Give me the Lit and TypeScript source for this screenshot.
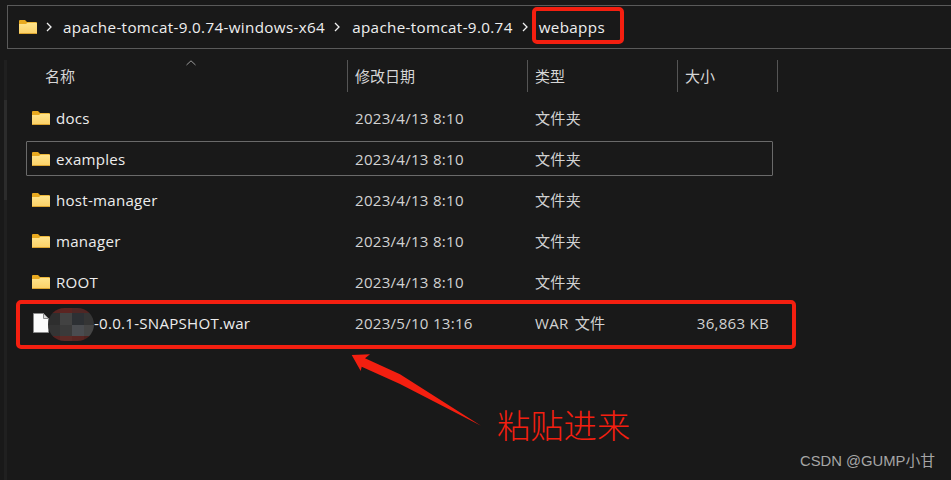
import { LitElement, html, css, svg } from "lit";
import { customElement } from "lit/decorators.js";

const folderIcon = svg`<svg class="ficon" viewBox="0 0 18 16" width="18" height="16">
  <defs><linearGradient id="fg" x1="0" y1="0" x2="0" y2="1"><stop offset="0" stop-color="#ffe48c"/><stop offset="1" stop-color="#fbd066"/></linearGradient></defs>
  <path d="M0 2 Q0 1 1 1 H6 L8 3 H17 Q18 3 18 4 V14 Q18 15 17 15 H1 Q0 15 0 14 Z" fill="#e8a91f"/>
  <path d="M0 5 H7 L8.500 3.800 H17 Q18 3.800 18 4.800 V14 Q18 15 17 15 H1 Q0 15 0 14 Z" fill="url(#fg)"/>
  <path d="M0 14 H18 Q18 15 17 15 H1 Q0 15 0 14 Z" fill="#dba32e"/>
</svg>`;

const fileIcon = svg`<svg class="ficon" viewBox="0 0 16 20" width="16" height="20">
  <path d="M0.500 0.500 H10.500 L15.500 5.500 V19.500 H0.500 Z" fill="#fbfbfb" stroke="#8a8a8a"/>
  <path d="M10.500 0.500 V5.500 H15.500 Z" fill="#d9d9d9" stroke="#8a8a8a"/>
</svg>`;

const chevron = svg`<svg class="chev" viewBox="0 0 6 10" width="6" height="10"><path d="M1 1 L5 5 L1 9" fill="none" stroke="#f0f0f0" stroke-width="1.300"/></svg>`;

const mosaic = [
  "#5a2320", "#5b2421", "#4e2725", "#512523",
  "#2e2e2e", "#424242", "#2d3034", "#353535",
  "#343434", "#3a3a3a", "#4a4c50", "#454545",
  "#572321", "#5c2a26", "#582522", "#4e2220",
];

interface Row { name: string; date: string; type: string; size?: string; file?: boolean; selected?: boolean; }

const rows: Row[] = [
  { name: "docs", date: "2023/4/13 8:10", type: "文件夹" },
  { name: "examples", date: "2023/4/13 8:10", type: "文件夹", selected: true },
  { name: "host-manager", date: "2023/4/13 8:10", type: "文件夹" },
  { name: "manager", date: "2023/4/13 8:10", type: "文件夹" },
  { name: "ROOT", date: "2023/4/13 8:10", type: "文件夹" },
  { name: "-0.0.1-SNAPSHOT.war", date: "2023/5/10 13:16", type: "WAR 文件", size: "36,863 KB", file: true },
];

@customElement("app-root")
export class AppRoot extends LitElement {
  static styles = css`
    :host {
      display: block;
      position: relative;
      width: 951px;
      height: 480px;
      overflow: hidden;
      background: #191919;
      color: #e6e6e6;
      font-family: "Open Sans", "Noto Sans CJK SC", sans-serif;
      font-size: 15.1px;
      letter-spacing: 0.25px;
    }
    .address {
      box-sizing: border-box;
      margin: 5px 0 0 7px;
      width: 960px;
      height: 44px;
      border: 1px solid #5a5a5a;
      display: flex;
      align-items: center;
      padding-left: 11px;
      color: #efefef;
      font-size: 15.2px;
      letter-spacing: 0.35px;
    }
    .address .ficon { margin-right: 9px; }
    .chev { flex: none; }
    .crumb { margin: 0 9px 0 12px; white-space: nowrap; }
    .crumb.first { margin-left: 11px; }
    .crumb.last { margin-left: 11px; }
    .header {
      display: grid;
      grid-template-columns: 321px 180px 150px 100px;
      width: 751px;
      height: 32px;
      margin: 11px 0 0 27px;
      position: relative;
      color: #d6d6d6;
      font-size: 15px;
      letter-spacing: 0;
    }
    .header div {
      display: flex;
      align-items: center;
      padding: 0 0 2px 7px;
      border-right: 1px solid #555;
      box-sizing: border-box;
      position: relative;
    }
    .header div:first-child { padding-left: 18px; }
    .sort {
      position: absolute;
      left: 159px;
      top: 0;
    }
    .list {
      display: flex;
      flex-direction: column;
      gap: 6px;
      width: 747px;
      margin: 8px 0 0 26px;
    }
    .row {
      display: grid;
      grid-template-columns: 321px 180px 150px 96px;
      height: 35px;
      box-sizing: border-box;
      align-items: center;
      border: 1px solid transparent;
      border-radius: 1px;
    }
    .row.selected { border-color: #6a6a6a; }
    .cell { padding-left: 7px; white-space: nowrap; color: #d2d2d2; }
    .cell.type { padding-bottom: 2px; }
    .row.file .type { word-spacing: 2px; }
    .row .cell:first-child {
      display: flex;
      align-items: center;
      gap: 6px;
      padding-left: 5px;
      color: #ededed;
    }
    .row .size { text-align: right; padding: 0 5px 0 0; }
    .row.file .cell:first-child { gap: 45px; padding-left: 6px; }
    .scroll {
      position: absolute;
      left: 4px;
      top: 60px;
      width: 3px;
      height: 420px;
      background: #202020;
    }
    .scroll i {
      display: block;
      margin-top: 40px;
      height: 100px;
      background: #2c2c2c;
    }
    .redbox {
      position: absolute;
      box-sizing: border-box;
      border: 4px solid #f41f10;
      border-radius: 5px;
    }
    .redbox.top { left: 532px; top: 7px; width: 92px; height: 37px; }
    .redbox.bottom { left: 16px; top: 300px; width: 780px; height: 49px; }
    .blur {
      position: absolute;
      left: 48px;
      top: 308px;
      width: 46px;
      height: 33px;
      border-radius: 17px;
      overflow: hidden;
      display: grid;
      grid-template-columns: 12px 12px 12px 10px;
      grid-template-rows: 5px 12px 11px 5px;
    }
    .arrow { position: absolute; left: 345px; top: 350px; }
    .note {
      position: absolute;
      left: 497px;
      top: 402px;
      color: #f41f10;
      font-size: 33.300px;
      line-height: 44px;
      letter-spacing: 0;
      font-family: "Noto Sans CJK SC", sans-serif;
      font-weight: 300;
    }
    .mark {
      position: absolute;
      left: 800px;
      top: 452px;
      color: #a6a6a6;
      font-size: 14.800px;
      line-height: 18px;
      letter-spacing: 0;
      font-family: "Liberation Sans", "Noto Sans CJK SC", sans-serif;
    }
  `;

  render() {
    return html`
      <div class="address">
        ${folderIcon}${chevron}
        <span class="crumb first">apache-tomcat-9.0.74-windows-x64</span>${chevron}
        <span class="crumb">apache-tomcat-9.0.74</span>${chevron}
        <span class="crumb last">webapps</span>
      </div>
      <div class="header">
        <div>名称
          <svg class="sort" viewBox="0 0 10 6" width="10" height="6"><path d="M0.500 5 L5 0.800 L9.500 5" fill="none" stroke="#9a9a9a"/></svg>
        </div>
        <div>修改日期</div><div>类型</div><div>大小</div>
      </div>
      <div class="list">
        ${rows.map((r) => html`
          <div class="row ${r.selected ? "selected" : ""} ${r.file ? "file" : ""}">
            <div class="cell">${r.file ? fileIcon : folderIcon}<span>${r.name}</span></div>
            <div class="cell">${r.date}</div>
            <div class="cell type">${r.type}</div>
            <div class="cell size">${r.size ?? ""}</div>
          </div>`)}
      </div>
      <div class="scroll"><i></i></div>
      <div class="blur">${mosaic.map((c) => html`<span style="background:${c}"></span>`)}</div>
      <div class="redbox top"></div>
      <div class="redbox bottom"></div>
      <svg class="arrow" width="140" height="80" viewBox="345 350 140 80">
        <path d="M351.700 355 L370 354.300 L365 358.300 L400 374.300 L481 425.800 L400 384 L361.700 366.700 L360.700 371 Z" fill="#f41f10"/>
      </svg>
      <div class="note">粘贴进来</div>
      <div class="mark">CSDN @GUMP小甘</div>
    `;
  }
}
